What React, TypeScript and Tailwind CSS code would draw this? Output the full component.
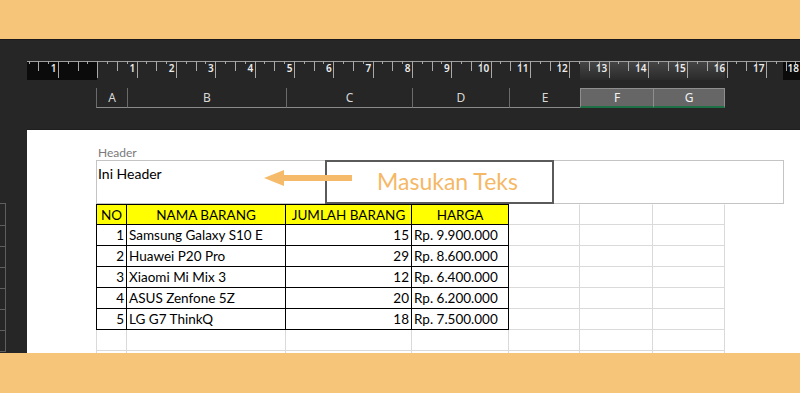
import React from "react";

const rows = [
  { no: 1, nama: "Samsung Galaxy S10 E", jumlah: 15, harga: "Rp. 9.900.000" },
  { no: 2, nama: "Huawei P20 Pro", jumlah: 29, harga: "Rp. 8.600.000" },
  { no: 3, nama: "Xiaomi Mi Mix 3", jumlah: 12, harga: "Rp. 6.400.000" },
  { no: 4, nama: "ASUS Zenfone 5Z", jumlah: 20, harga: "Rp. 6.200.000" },
  { no: 5, nama: "LG G7 ThinkQ", jumlah: 18, harga: "Rp. 7.500.000" },
];

const colHeads = [
  { label: "A", w: "w-[31px]", sel: false },
  { label: "B", w: "w-[159px]", sel: false },
  { label: "C", w: "w-[126px]", sel: false },
  { label: "D", w: "w-[97px]", sel: false },
  { label: "E", w: "w-[71px]", sel: false },
  { label: "F", w: "w-[73px]", sel: true },
  { label: "G", w: "w-[72px]", sel: true },
];

const Ruler = () => {
  const ticks = [];
  for (let i = -3; i < 80; i++) {
    const x = Math.round(31 + 9.8333 * i) + 0.5;
    if (x < 0 || x > 773) continue;
    const m = ((i % 4) + 4) % 4;
    const h = m === 0 ? 17 : m === 2 ? 10 : 3;
    ticks.push(<line key={i} x1={x} y1={0} x2={x} y2={h} stroke="#a9a9a9" strokeWidth={1} />);
  }
  const labels = [];
  for (let k = 0; k < 20; k++) {
    if (k === 1) continue;
    const x = Math.min(31 + 39.333 * k - 1.5, 772);
    labels.push(
      <text key={k} x={x} y={11} textAnchor="end" fontSize={10} fontWeight={600} fill="#ececec" fontFamily="'Noto Sans', sans-serif">
        {k === 0 ? "1" : String(k - 1)}
      </text>
    );
  }
  return (
    <svg width={773} height={19} className="block">
      <defs>
        <linearGradient id="hl" x1="0" y1="0" x2="0" y2="1">
          <stop offset="0" stopColor="#454545" />
          <stop offset="1" stopColor="#2a2a2a" />
        </linearGradient>
      </defs>
      <rect x={0} y={1} width={70} height={18} fill="#0b0b0b" />
      <rect x={756} y={1} width={17} height={18} fill="#0b0b0b" />
      <rect x={553} y={1} width={145} height={18} fill="url(#hl)" />
      <line x1={0} y1={0.5} x2={773} y2={0.5} stroke="#9d9d9d" />
      {ticks}
      {labels}
    </svg>
  );
};

const App = () => {
  const gridRows = 8;
  const cells = [];
  for (let r = 0; r < gridRows; r++) {
    for (let c = 0; c < 7; c++) {
      const black = r <= 5 && c <= 3;
      let cls = "h-[21px] border-r border-b leading-[20px] text-[13.5px] text-black whitespace-nowrap overflow-hidden ";
      cls += black ? "border-black " : "border-[#dadada] ";
      if (c === 0) cls += "border-l ";
      if (r === 0) cls += black ? "border-t bg-[#ffff00] text-center " : "border-t border-t-transparent ";
      let text = "";
      if (r === 0 && c <= 3) text = ["NO", "NAMA BARANG", "JUMLAH BARANG", "HARGA"][c];
      if (r >= 1 && r <= 5 && c <= 3) {
        const d = rows[r - 1];
        if (c === 0) { text = String(d.no); cls += "text-right pr-[2px] "; }
        if (c === 1) { text = d.nama; cls += "pl-[2px] "; }
        if (c === 2) { text = String(d.jumlah); cls += "text-right pr-[2px] "; }
        if (c === 3) { text = d.harga; cls += "pl-[2px] "; }
      }
      cells.push(
        <div key={r + "-" + c} className={cls}>
          {text}
        </div>
      );
    }
  }

  return (
    <div className="w-[800px] h-[393px] bg-[#f6c579] flex flex-col overflow-hidden">
      <div className="h-[39px] shrink-0" />
      <div className="h-[314px] shrink-0 bg-[#262626] border-t border-[#1a1a1a] flex">
        {/* left strip */}
        <div className="w-[27px] shrink-0 flex flex-col">
          <div className="h-[163px] shrink-0" />
          <div className="w-[6px] h-[23px] border-t border-r border-b border-[#5e5e5e]" />
          <div className="w-[6px] h-[21px] border-r border-b border-[#5e5e5e]" />
          <div className="w-[6px] h-[21px] border-r border-b border-[#5e5e5e]" />
          <div className="w-[6px] h-[21px] border-r border-b border-[#5e5e5e]" />
          <div className="w-[6px] h-[21px] border-r border-b border-[#5e5e5e]" />
          <div className="w-[6px] h-[21px] border-r border-b border-[#5e5e5e]" />
          <div className="w-[6px] h-[21px] border-r border-b border-[#5e5e5e]" />
        </div>

        <div className="w-[773px] flex flex-col">
          <div className="mt-[21px]">
            <Ruler />
          </div>

          {/* column headers */}
          <div className="mt-[8px] flex pl-[69px] h-[20px] font-['Noto_Sans',sans-serif] text-[12px]">
            {colHeads.map((h) => (
              <div
                key={h.label}
                className={
                  h.w +
                  " h-[20px] flex items-center justify-center " +
                  (h.sel
                    ? "bg-[#666666] border-l border-t border-[#8e8e8e] border-b-2 border-b-[#1e7145] text-[#f2f2f2] last:border-r"
                    : "border-l border-[#6b6b6b] border-b border-b-[#8a8a8a] text-[#d8d8d8]")
                }
              >
                {h.label}
              </div>
            ))}
          </div>

          {/* page */}
          <div className="relative mt-[21px] flex-1 bg-white border-t border-[#1f1f1f] pt-[15px] pl-[69px] overflow-hidden font-['Lato',sans-serif]">
            <div className="h-[15px] pl-[2px] text-[12px] leading-[15px] text-[#7a7a7a]">Header</div>
            <div className="flex h-[44px]">
              <div className="w-[229px] border border-r-0 border-[#c4c4c4] pl-[1px] pt-[3px] text-[14px] leading-[20px] text-black">
                Ini Header
              </div>
              <div className="w-[229px] border-2 border-[#5a5a5a] pl-[50px] text-[23px] leading-[38px] text-[#f5b866]">
                Masukan Teks
              </div>
              <div className="w-[230px] border border-l-0 border-[#c4c4c4]" />
            </div>
            <div className="grid grid-cols-[31px_159px_126px_97px_71px_73px_72px] w-[629px]">
              {cells}
            </div>

            <svg width={88} height={18} className="absolute left-[237px] top-[39px]">
              <polygon points="0,9 20,1 20,17" fill="#f5bb6b" />
              <rect x={18} y={6} width={70} height={6} fill="#f5bb6b" />
            </svg>
          </div>
        </div>
      </div>
      <div className="h-[40px] shrink-0" />
    </div>
  );
};

export default App;
